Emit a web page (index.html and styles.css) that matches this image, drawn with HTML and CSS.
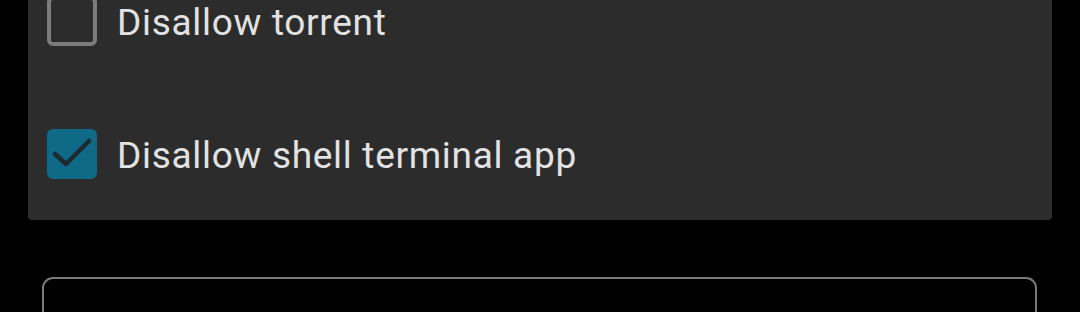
FILE: index.html
```html
<!DOCTYPE html>
<html lang="en">
<head>
  <meta charset="UTF-8" />
  <meta name="viewport" content="width=device-width, initial-scale=1.0" />
  <title>Restrictions</title>
  <link rel="stylesheet" href="styles.css">
</head>
<body>

  <!-- restriction options card -->
  <div class="card">
    <label class="option">
      <span class="check"></span>
      <span class="label">Disallow torrent</span>
    </label>
    <label class="option">
      <span class="check checked">
        <svg viewBox="0 0 50 50" width="50" height="50">
          <path d="M8 25 L19 35 L42 12" fill="none" stroke="#1d2a31" stroke-width="4.5" stroke-linecap="round" stroke-linejoin="round" />
        </svg>
      </span>
      <span class="label">Disallow shell terminal app</span>
    </label>
  </div>

  <div class="field"></div>

</body>
</html>
```

FILE: styles.css
```css
body {
  margin: 0;
  background: #000;
  font-family: Roboto, "Noto Sans", sans-serif;
  overflow: hidden;
}
.card {
  margin: -46px 28px 0 28px;
  background: #2c2c2c;
  border-radius: 0 0 4px 4px;
  box-shadow: 0 2px 3px rgba(0, 0, 0, 0.6);
  display: flex;
  flex-direction: column;
}
.option {
  height: 133px;
  display: flex;
  align-items: center;
  padding-left: 19px;
  gap: 20px;
}
.check {
  width: 50px;
  height: 50px;
  box-sizing: border-box;
  border: 4px solid #7c7c7c;
  border-radius: 6px;
  flex-shrink: 0;
}
.check.checked {
  border: none;
  background: #0f6a88;
}
.check svg {
  display: block;
}
.label {
  color: #e2e2e2;
  font-size: 37px;
  letter-spacing: 0.7px;
  line-height: 1;
  padding-top: 3px;
}
.field {
  margin: 57px 43px 0 42px;
  height: 80px;
  border: 2px solid #7a7a7a;
  border-radius: 11px;
}
```
